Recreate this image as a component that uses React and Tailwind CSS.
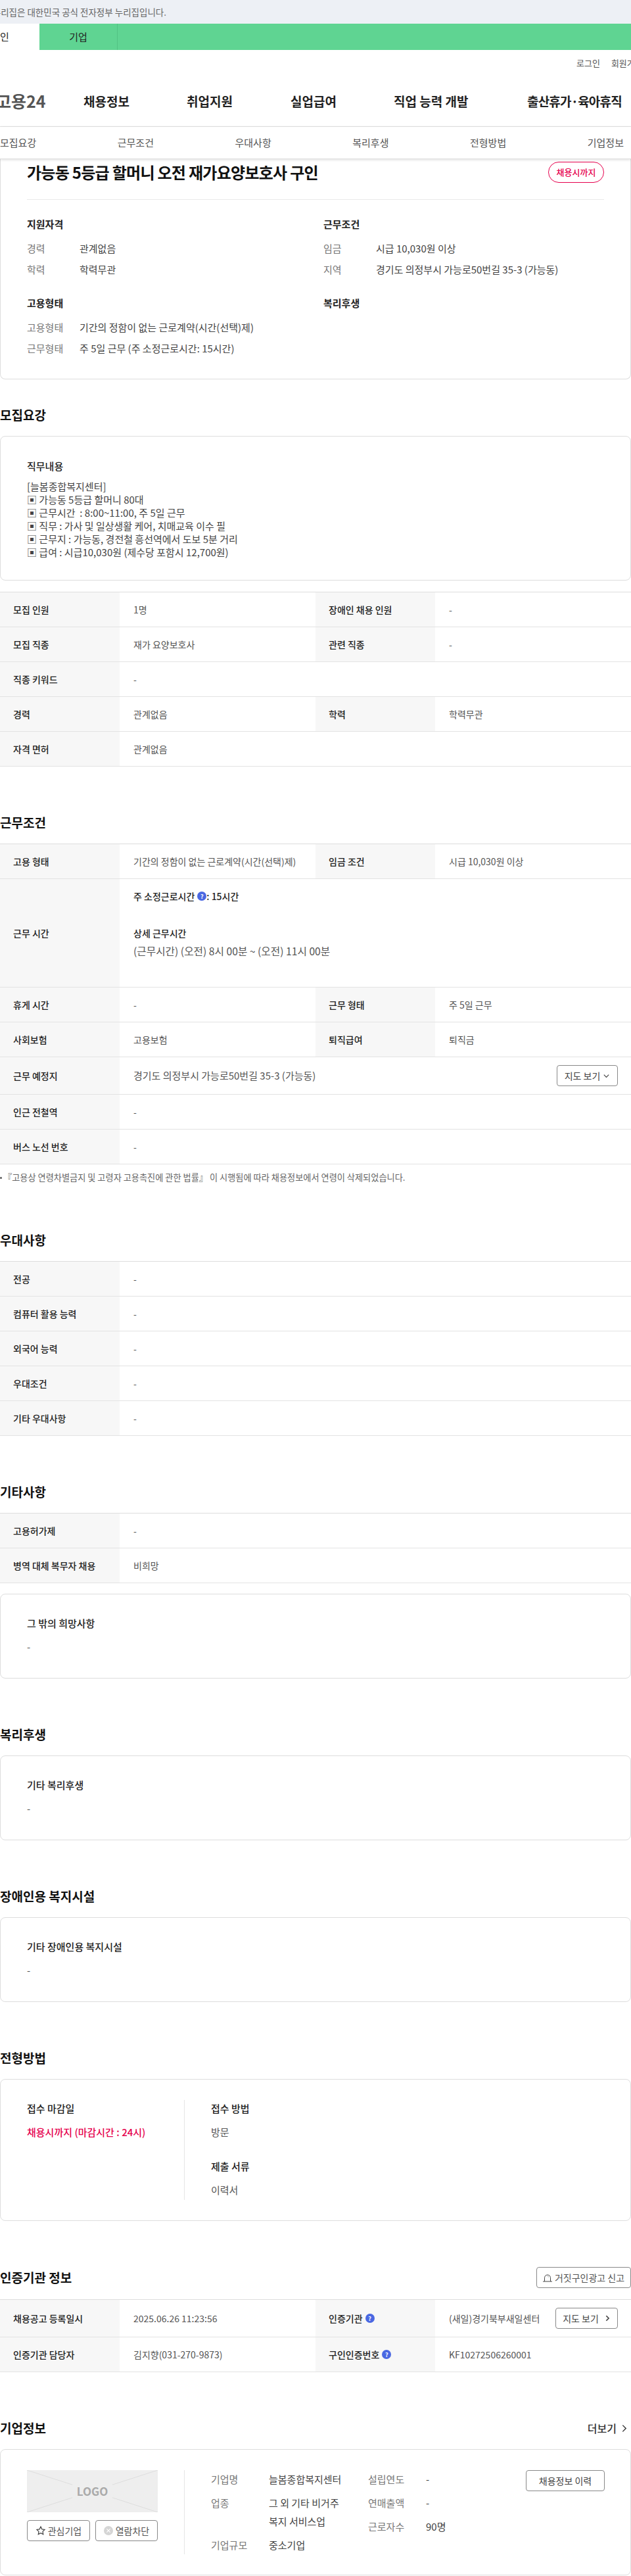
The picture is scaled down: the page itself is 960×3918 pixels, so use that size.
import React from "react";

const FONT = 'font-["Noto_Sans_CJK_KR","Noto_Sans",sans-serif]';

const Help = () => (
  <span className="inline-flex w-[14px] h-[14px] rounded-full bg-[#4a68e2] text-white text-[9px] font-bold items-center justify-center leading-none align-middle">?</span>
);

const Chevron = ({ d = "right", className = "", sw = "1.3" }) => (
  <svg viewBox="0 0 12 12" className={className} fill="none" stroke="currentColor" strokeWidth={sw}>
    <path d={d === "right" ? "M4 1.5 8.5 6 4 10.5" : "M2 4l4 4 4-4"} />
  </svg>
);

const Heading = ({ children, right, first, className = "mt-[71px] mb-[18px]" }) => (
  <div className={`${first ? "mt-[40px] mb-[18px]" : className} h-[28px] flex items-center justify-between`}>
    <h2 className="text-[19px] leading-[28px] font-bold text-[#111]">{children}</h2>
    {right}
  </div>
);

const Table = ({ children, className = "" }) => (
  <div className={`border-t border-[#dddddd] ${className}`}>{children}</div>
);

const Row = ({ h = "h-[53px]", children }) => (
  <div className={`flex border-b border-[#e3e3e3] ${h}`}>{children}</div>
);

const Th = ({ children }) => (
  <div className="w-[182px] shrink-0 bg-[#f7f7f7] pl-[20px] flex items-center gap-[4px] text-[14px] font-medium text-[#222]">{children}</div>
);

const Td = ({ children, half, className = "" }) => (
  <div className={`${half ? "w-[298px]" : "flex-1"} pl-[21px] flex items-center text-[14px] text-[#555] ${className}`}>{children}</div>
);

const Pair = ({ a, b, c, d }) => (
  <Row>
    <Th>{a}</Th>
    <Td half>{b}</Td>
    <Th>{c}</Th>
    <Td>{d}</Td>
  </Row>
);

const One = ({ a, b }) => (
  <Row>
    <Th>{a}</Th>
    <Td>{b}</Td>
  </Row>
);

const TextCard = ({ title, className = "" }) => (
  <div className={`border border-[#dddddd] rounded-[8px] px-[40px] pt-[34px] pb-[37px] ${className}`}>
    <div className="text-[15px] leading-[20px] font-medium text-[#222]">{title}</div>
    <div className="mt-[16px] text-[15px] leading-[20px] text-[#555]">-</div>
  </div>
);

const Info = ({ k, v }) => (
  <div className="flex text-[15px] leading-[20px] mt-[12px]">
    <div className="w-[80px] shrink-0 text-[#777]">{k}</div>
    <div className="text-[#444]">{v}</div>
  </div>
);

const Sub = ({ children }) => (
  <div className="text-[15px] leading-[20px] font-bold text-[#222] mb-[17px]">{children}</div>
);

const Block = ({ title, value, red, className = "" }) => (
  <div className={className}>
    <div className="text-[15px] leading-[26px] font-medium text-[#222]">{title}</div>
    <div className={`mt-[10px] text-[15px] leading-[26px] ${red ? "text-[#e6004d] font-medium" : "text-[#555]"}`}>{value}</div>
  </div>
);

const Btn = ({ children, className = "" }) => (
  <div className={`border border-[#888888] rounded-[4px] flex items-center justify-center text-[14px] text-[#444] ${className}`}>{children}</div>
);

const CompanyLine = ({ k, v, className = "" }) => (
  <div className={`flex text-[15px] leading-[28px] ${className}`}>
    <div className="w-[88px] shrink-0 text-[#777]">{k}</div>
    <div className="text-[#444]">{v}</div>
  </div>
);

export default function App() {
  return (
    <div className={`w-[960px] h-[3918px] overflow-hidden bg-white text-[#222] ${FONT}`}>
      <div className="h-[36px] bg-[#edf0f5] flex items-center text-[13.5px] text-[#666] whitespace-nowrap">
        <div className="w-[253px] flex justify-end">
          <span className="shrink-0">이 누리집은 대한민국 공식 전자정부 누리집입니다.</span>
        </div>
      </div>
      <div className="h-[40px] bg-[#5fd492] flex text-[15px] text-[#222]">
        <div className="ml-[-60px] w-[120px] bg-white flex items-center justify-center">개인</div>
        <div className="w-[119px] border-r border-[#52c283] flex items-center justify-center">기업</div>
      </div>

      <div className="h-[117px] border-b border-[#e5e5e5] relative">
        <div className="h-[40px] flex items-center gap-[17px] pl-[877px] text-[13px] text-[#555] whitespace-nowrap w-[1000px]">
          <span>로그인</span>
          <span>회원가입</span>
        </div>
        <div className="mt-[18px] flex items-center h-[40px] whitespace-nowrap text-[19px] font-bold text-[#222]">
          <div className="w-[124px] ml-[-6px] shrink-0 text-[25px] font-bold text-[#555]">고용24</div>
          <div className="flex">
            <span className="w-[166px] pl-[9px]">채용정보</span>
            <span className="w-[158px]">취업지원</span>
            <span className="w-[157px]">실업급여</span>
            <span className="w-[203px]">직업 능력 개발</span>
            <span className="tracking-[-0.8px]">출산휴가·육아휴직</span>
          </div>
        </div>
      </div>

      <div className="relative z-10 h-[49px] bg-white border-b border-[#e0e0e0] shadow-[0_1px_4px_rgba(0,0,0,0.15)] flex justify-between items-center text-[15px] text-[#555] pr-[11px]">
        <span>모집요강</span>
        <span>근무조건</span>
        <span>우대사항</span>
        <span>복리후생</span>
        <span>전형방법</span>
        <span>기업정보</span>
      </div>

      <div className="border-x border-b border-[#dddddd] rounded-b-[8px] px-[40px] pb-[36px]">
        <div className="pt-[2px] pb-[23px] border-b border-[#eaeaea] flex items-center justify-between">
          <h1 className="text-[24px] leading-[36px] font-bold text-[#111] tracking-[-0.72px]">가능동 5등급 할머니 오전 재가요양보호사 구인</h1>
          <div className="w-[85px] h-[32px] border border-[#e6004d] rounded-full flex items-center justify-center text-[13px] font-medium text-[#e6004d]">채용시까지</div>
        </div>
        <div className="grid grid-cols-[451px_1fr] mt-[27px]">
          <div>
            <Sub>지원자격</Sub>
            <Info k="경력" v="관계없음" />
            <Info k="학력" v="학력무관" />
          </div>
          <div>
            <Sub>근무조건</Sub>
            <Info k="임금" v="시급 10,030원 이상" />
            <Info k="지역" v="경기도 의정부시 가능로50번길 35-3 (가능동)" />
          </div>
          <div className="mt-[31px]">
            <Sub>고용형태</Sub>
            <Info k="고용형태" v="기간의 정함이 없는 근로계약(시간(선택)제)" />
            <Info k="근무형태" v="주 5일 근무 (주 소정근로시간: 15시간)" />
          </div>
          <div className="mt-[31px]">
            <Sub>복리후생</Sub>
          </div>
        </div>
      </div>

      <Heading first>모집요강</Heading>
      <div className="border border-[#dddddd] rounded-[8px] px-[40px] pt-[35px] pb-[32px]">
        <div className="text-[15px] leading-[20px] font-medium text-[#222]">직무내용</div>
        <div className="mt-[11px] text-[15px] leading-[20px] text-[#444]">
          <div>[늘봄종합복지센터]</div>
          <div>▣ 가능동 5등급 할머니 80대</div>
          <div>▣ 근무시간 &nbsp;: 8:00~11:00, 주 5일 근무</div>
          <div>▣ 직무 : 가사 및 일상생활 케어, 치매교육 이수 필</div>
          <div>▣ 근무지 : 가능동, 경전철 흥선역에서 도보 5분 거리</div>
          <div>▣ 급여 : 시급10,030원 (제수당 포함시 12,700원)</div>
        </div>
      </div>
      <Table className="mt-[17px]">
        <Pair a="모집 인원" b="1명" c="장애인 채용 인원" d="-" />
        <Pair a="모집 직종" b="재가 요양보호사" c="관련 직종" d="-" />
        <One a="직종 키워드" b="-" />
        <Pair a="경력" b="관계없음" c="학력" d="학력무관" />
        <One a="자격 면허" b="관계없음" />
      </Table>

      <Heading>근무조건</Heading>
      <Table>
        <Pair a="고용 형태" b="기간의 정함이 없는 근로계약(시간(선택)제)" c="임금 조건" d="시급 10,030원 이상" />
        <Row h="h-[165px]">
          <Th>근무 시간</Th>
          <div className="flex-1 pl-[21px] pt-[16px] text-[14px] text-[#444]">
            <div className="leading-[20px] font-medium text-[#222] flex items-center gap-[4px]">
              주 소정근로시간 <Help /><span className="ml-[-4px]">: 15시간</span>
            </div>
            <div className="mt-[36px] leading-[20px] font-medium text-[#222]">상세 근무시간</div>
            <div className="mt-[8px] leading-[20px] text-[15.7px] text-[#555]">(근무시간) (오전) 8시 00분 ~ (오전) 11시 00분</div>
          </div>
        </Row>
        <Pair a="휴게 시간" b="-" c="근무 형태" d="주 5일 근무" />
        <Pair a="사회보험" b="고용보험" c="퇴직급여" d="퇴직금" />
        <Row h="h-[57px]">
          <Th>근무 예정지</Th>
          <div className="flex-1 pl-[21px] pr-[20px] flex items-center justify-between text-[15px] text-[#555]">
            <span>경기도 의정부시 가능로50번길 35-3 (가능동)</span>
            <Btn className="w-[93px] h-[32px] gap-[4px]">지도 보기<Chevron d="down" className="w-[11px] h-[11px]" /></Btn>
          </div>
        </Row>
        <One a="인근 전철역" b="-" />
        <One a="버스 노선 번호" b="-" />
      </Table>
      <div className="mt-[10px] h-[20px] flex items-center text-[13.2px] text-[#666] whitespace-nowrap">
        <span className="w-[3px] h-[3px] rounded-full bg-[#555] mr-[2px]"></span>
        『고용상 연령차별금지 및 고령자 고용촉진에 관한 법률』 이 시행됨에 따라 채용정보에서 연령이 삭제되었습니다.
      </div>

      <Heading>우대사항</Heading>
      <Table>
        <One a="전공" b="-" />
        <One a="컴퓨터 활용 능력" b="-" />
        <One a="외국어 능력" b="-" />
        <One a="우대조건" b="-" />
        <One a="기타 우대사항" b="-" />
      </Table>

      <Heading>기타사항</Heading>
      <Table>
        <One a="고용허가제" b="-" />
        <One a="병역 대체 복무자 채용" b="비희망" />
      </Table>
      <TextCard title="그 밖의 희망사항" className="mt-[16px]" />

      <Heading>복리후생</Heading>
      <TextCard title="기타 복리후생" />

      <Heading>장애인용 복지시설</Heading>
      <TextCard title="기타 장애인용 복지시설" />

      <Heading>전형방법</Heading>
      <div className="border border-[#dddddd] rounded-[8px] flex px-[40px] py-[31px]">
        <div className="w-[240px] border-r border-[#e5e5e5]">
          <Block title="접수 마감일" value="채용시까지 (마감시간 : 24시)" red />
        </div>
        <div className="pl-[40px] pb-[2px]">
          <Block title="접수 방법" value="방문" />
          <Block title="제출 서류" value="이력서" className="mt-[26px]" />
        </div>
      </div>

      <Heading
        className="mt-[72px] mb-[19px]"
        right={
          <Btn className="w-[144px] h-[32px] gap-[4px] text-[#555]">
            <svg viewBox="0 0 14 13" className="w-[14px] h-[13px]" fill="none" stroke="#444" strokeWidth="1">
              <path d="M2.5 12V6.5a4.5 4.5 0 0 1 9 0V12M0 12h14M7.5 4.2 8.5 5" />
            </svg>
            거짓구인광고 신고
          </Btn>
        }
      >
        인증기관 정보
      </Heading>
      <Table>
        <Row h="h-[57px]">
          <Th>채용공고 등록일시</Th>
          <Td half>2025.06.26 11:23:56</Td>
          <Th>인증기관 <Help /></Th>
          <div className="flex-1 pl-[21px] pr-[20px] flex items-center justify-between text-[14px] text-[#555] whitespace-nowrap">
            <span>(새일)경기북부새일센터</span>
            <Btn className="w-[95px] h-[32px] gap-[8px]">지도 보기<Chevron sw="2" className="w-[10px] h-[10px]" /></Btn>
          </div>
        </Row>
        <Pair a="인증기관 담당자" b="김지향(031-270-9873)" c={<>구인인증번호 <Help /></>} d="KF10272506260001" />
      </Table>

      <Heading
        right={
          <div className="flex items-center gap-[5px] text-[16px] font-medium text-[#333] pr-[4px]">
            더보기<Chevron className="w-[13px] h-[13px]" />
          </div>
        }
      >
        기업정보
      </Heading>
      <div className="border border-[#dddddd] rounded-[8px] flex px-[40px] pt-[31px] pb-[31px]">
        <div className="w-[240px] border-r border-[#e5e5e5] h-[128px] shrink-0">
          <div className="relative w-[199px] h-[64px] bg-[#eeeeee] flex items-center justify-center">
            <svg viewBox="0 0 199 64" className="absolute inset-0 w-full h-full" stroke="#dddddd" strokeWidth="1">
              <path d="M0 0 199 64M199 0 0 64" />
            </svg>
            <span className="relative bg-[#eeeeee] px-[7px] text-[17px] font-bold text-[#aaaaaa] leading-[20px]">LOGO</span>
          </div>
          <div className="mt-[12px] flex gap-[8px] w-[199px]">
            <Btn className="w-[96px] h-[32px] gap-[3px] text-[#555]">
              <svg viewBox="0 0 24 24" className="w-[16px] h-[16px]" fill="none" stroke="#444" strokeWidth="1.8">
                <path d="M12 3l2.8 5.8 6.2.9-4.5 4.4 1.1 6.3L12 17.4l-5.6 3 1.1-6.3L3 9.7l6.2-.9z" />
              </svg>
              관심기업
            </Btn>
            <Btn className="w-[95px] h-[32px] gap-[4px] text-[#555]">
              <svg viewBox="0 0 16 16" className="w-[14px] h-[14px]">
                <circle cx="8" cy="8" r="8" fill="#d5d5d5" />
                <path d="M5 5l6 6M11 5l-6 6" stroke="#fff" strokeWidth="1.3" />
              </svg>
              열람차단
            </Btn>
          </div>
        </div>
        <div className="pl-[40px] w-[279px] shrink-0">
          <CompanyLine k="기업명" v="늘봄종합복지센터" />
          <CompanyLine className="mt-[8px]" k="업종" v={<div className="w-[120px]">그 외 기타 비거주 복지 서비스업</div>} />
          <CompanyLine className="mt-[8px]" k="기업규모" v="중소기업" />
        </div>
        <div className="w-[240px] shrink-0">
          <CompanyLine k="설립연도" v="-" />
          <CompanyLine className="mt-[8px]" k="연매출액" v="-" />
          <CompanyLine className="mt-[8px]" k="근로자수" v="90명" />
        </div>
        <Btn className="w-[120px] h-[32px] shrink-0">채용정보 이력</Btn>
      </div>
    </div>
  );
}
